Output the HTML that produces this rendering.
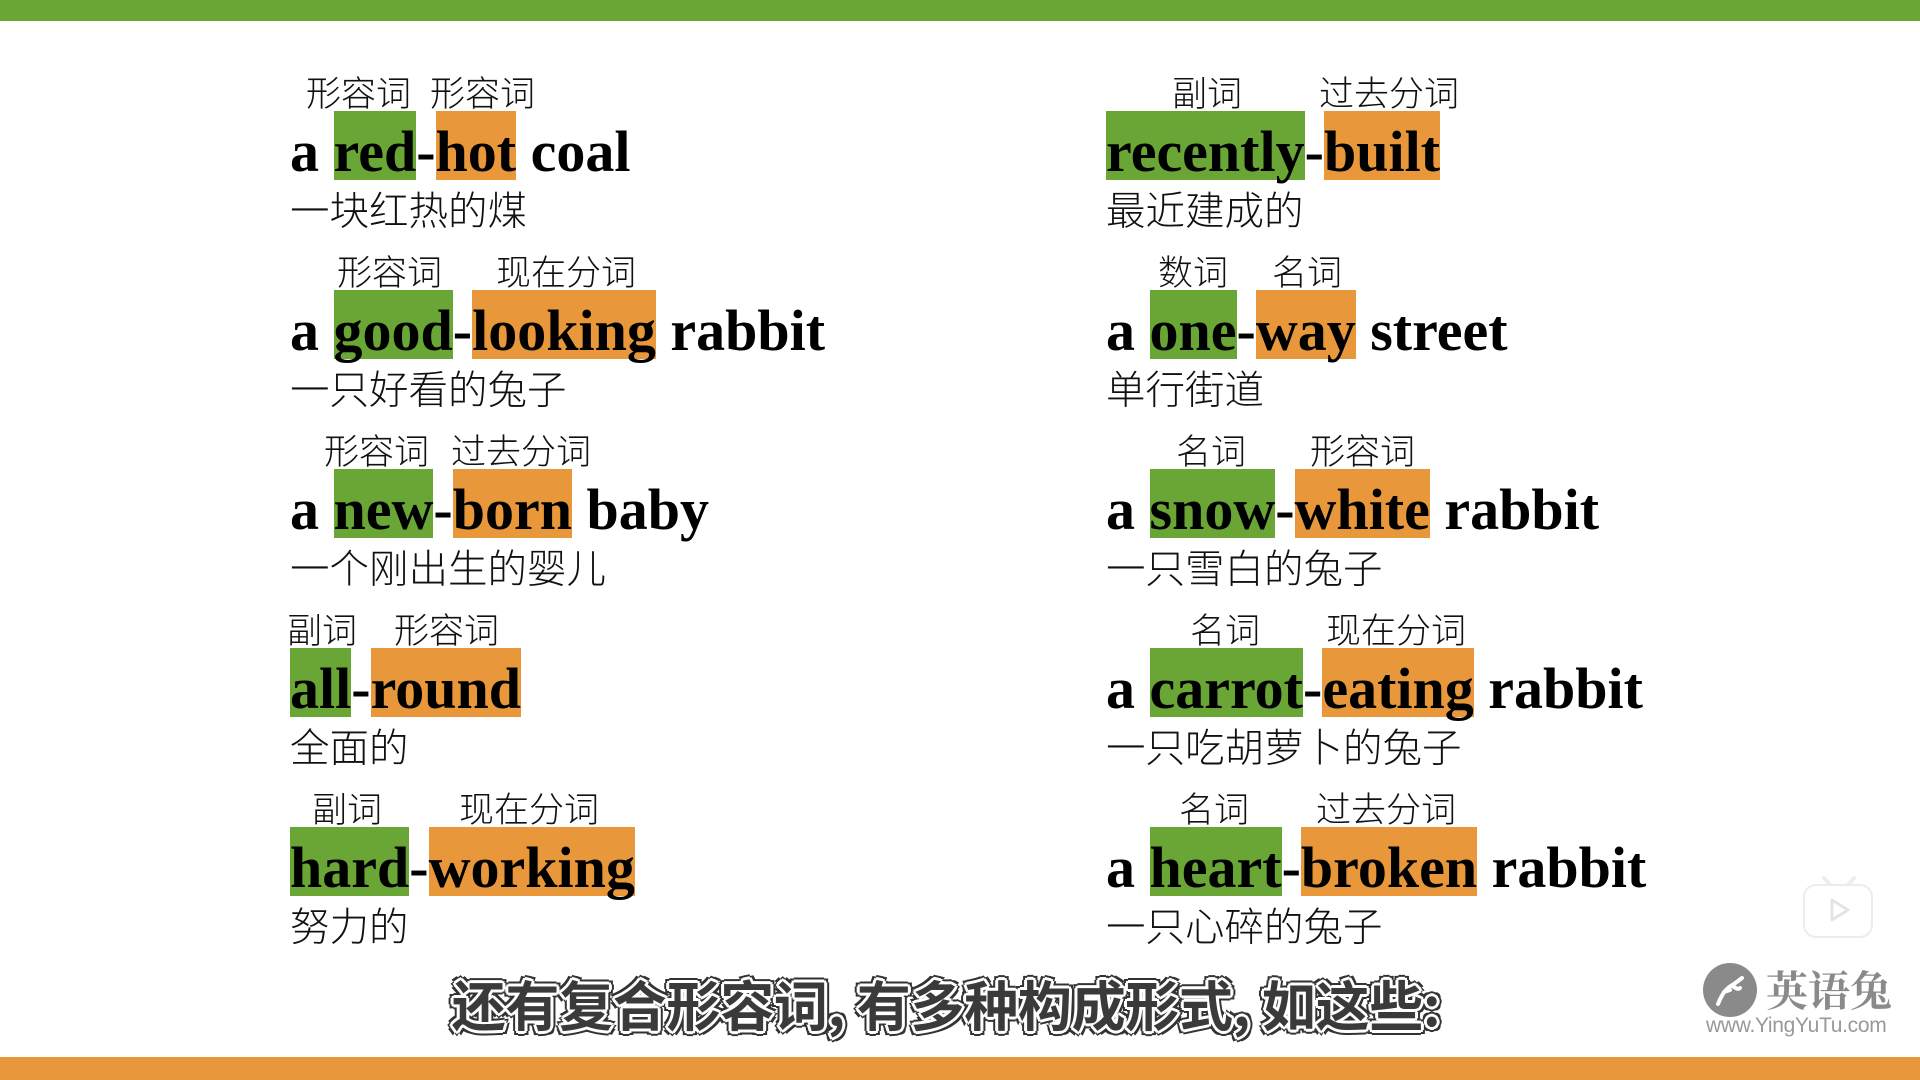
<!DOCTYPE html>
<html><head><meta charset="utf-8"><style>
*{margin:0;padding:0;box-sizing:border-box}
html,body{width:1920px;height:1080px;overflow:hidden;background:#fff;position:relative}
.top{position:absolute;left:0;top:0;width:1920px;height:21px;background:#6aa636}
.bot{position:absolute;left:0;top:1057px;width:1920px;height:23px;background:#e8983a}
.row{position:absolute;height:69px;white-space:nowrap}
.en{font-family:"Liberation Serif",serif;font-weight:bold;font-size:58px;line-height:81px;color:#000;display:block}
.g,.o{display:inline-block;height:69px;line-height:81px;overflow:visible}
.g{background:#6aa636}.o{background:#e8983a}
.lb{position:absolute;top:-36px;font-family:"Liberation Sans","Noto Sans CJK SC",sans-serif;font-weight:300;font-size:35px;line-height:40px;color:#111}
.zh{position:absolute;left:0;top:79px;font-family:"Liberation Sans","Noto Sans CJK SC",sans-serif;font-weight:300;font-size:39.5px;line-height:44px;color:#111}
.sub{position:absolute;left:0;width:1892px;text-align:center;top:968px;font-family:"Noto Sans CJK SC",sans-serif;font-weight:bold;font-size:54px;line-height:70px;color:#3a3a3a;letter-spacing:-0.3px;
text-shadow:-3px 0 #fff,3px 0 #fff,0 -3px #fff,0 3px #fff,-2px -2px #fff,2px 2px #fff,-2px 2px #fff,2px -2px #fff,-5px 0 #333,5px 0 #333,0 -5px #333,0 5px #333,-4px -4px #333,4px 4px #333,-4px 4px #333,4px -4px #333}
</style></head><body>
<div class="top"></div><div class="bot"></div>

<div class="row" style="left:290px;top:111px"><span class="lb" style="left:16px">形容词</span><span class="lb" style="left:140px">形容词</span><span class="en">a <span class="g">red</span>-<span class="o">hot</span> coal</span><span class="zh">一块红热的煤</span></div>
<div class="row" style="left:290px;top:290px"><span class="lb" style="left:47px">形容词</span><span class="lb" style="left:206px">现在分词</span><span class="en">a <span class="g">good</span>-<span class="o">looking</span> rabbit</span><span class="zh">一只好看的兔子</span></div>
<div class="row" style="left:290px;top:469px"><span class="lb" style="left:34px">形容词</span><span class="lb" style="left:161px">过去分词</span><span class="en">a <span class="g">new</span>-<span class="o">born</span> baby</span><span class="zh">一个刚出生的婴儿</span></div>
<div class="row" style="left:290px;top:648px"><span class="lb" style="left:-3px">副词</span><span class="lb" style="left:104px">形容词</span><span class="en"><span class="g">all</span>-<span class="o">round</span></span><span class="zh">全面的</span></div>
<div class="row" style="left:290px;top:827px"><span class="lb" style="left:22px">副词</span><span class="lb" style="left:169px">现在分词</span><span class="en"><span class="g">hard</span>-<span class="o">working</span></span><span class="zh">努力的</span></div>

<div class="row" style="left:1106px;top:111px"><span class="lb" style="left:66px">副词</span><span class="lb" style="left:213px">过去分词</span><span class="en"><span class="g">recently</span>-<span class="o">built</span></span><span class="zh">最近建成的</span></div>
<div class="row" style="left:1106px;top:290px"><span class="lb" style="left:52px">数词</span><span class="lb" style="left:166px">名词</span><span class="en">a <span class="g">one</span>-<span class="o">way</span> street</span><span class="zh">单行街道</span></div>
<div class="row" style="left:1106px;top:469px"><span class="lb" style="left:70px">名词</span><span class="lb" style="left:204px">形容词</span><span class="en">a <span class="g">snow</span>-<span class="o">white</span> rabbit</span><span class="zh">一只雪白的兔子</span></div>
<div class="row" style="left:1106px;top:648px"><span class="lb" style="left:84px">名词</span><span class="lb" style="left:220px">现在分词</span><span class="en">a <span class="g">carrot</span>-<span class="o">eating</span> rabbit</span><span class="zh">一只吃胡萝卜的兔子</span></div>
<div class="row" style="left:1106px;top:827px"><span class="lb" style="left:73px">名词</span><span class="lb" style="left:210px">过去分词</span><span class="en">a <span class="g">heart</span>-<span class="o">broken</span> rabbit</span><span class="zh">一只心碎的兔子</span></div>

<div class="sub">还有复合形容词, 有多种构成形式, 如这些:</div>

<svg style="position:absolute;left:1800px;top:872px" width="80" height="70" viewBox="0 0 80 70">
<line x1="24" y1="6" x2="31" y2="14" stroke="#eee" stroke-width="4" stroke-linecap="round"/>
<line x1="54" y1="6" x2="47" y2="14" stroke="#eee" stroke-width="4" stroke-linecap="round"/>
<rect x="4" y="13" width="68" height="52" rx="12" fill="#fff" stroke="#ececec" stroke-width="2"/>
<path d="M32 28 L48 38 L32 48 Z" fill="none" stroke="#e4e4e4" stroke-width="3" stroke-linejoin="round"/>
</svg>
<svg style="position:absolute;left:1702px;top:962px" width="56" height="56" viewBox="0 0 56 56">
<circle cx="28" cy="28" r="27" fill="#8a8a8a"/>
<path d="M16 42 C20 32 24 26 32 22 L40 16 M30 24 C34 26 36 28 38 26 M22 30 L28 28" stroke="#fff" stroke-width="4" fill="none" stroke-linecap="round"/>
</svg>
<div style="position:absolute;left:1766px;top:962px;font-family:'Noto Serif CJK SC',serif;font-weight:bold;font-size:42px;line-height:54px;color:#8a8a8a">英语兔</div>
<div style="position:absolute;left:1706px;top:1014px;font-family:'Liberation Sans',sans-serif;font-size:21px;line-height:24px;color:#999;letter-spacing:-0.3px">www.YingYuTu.com</div>
</body></html>
